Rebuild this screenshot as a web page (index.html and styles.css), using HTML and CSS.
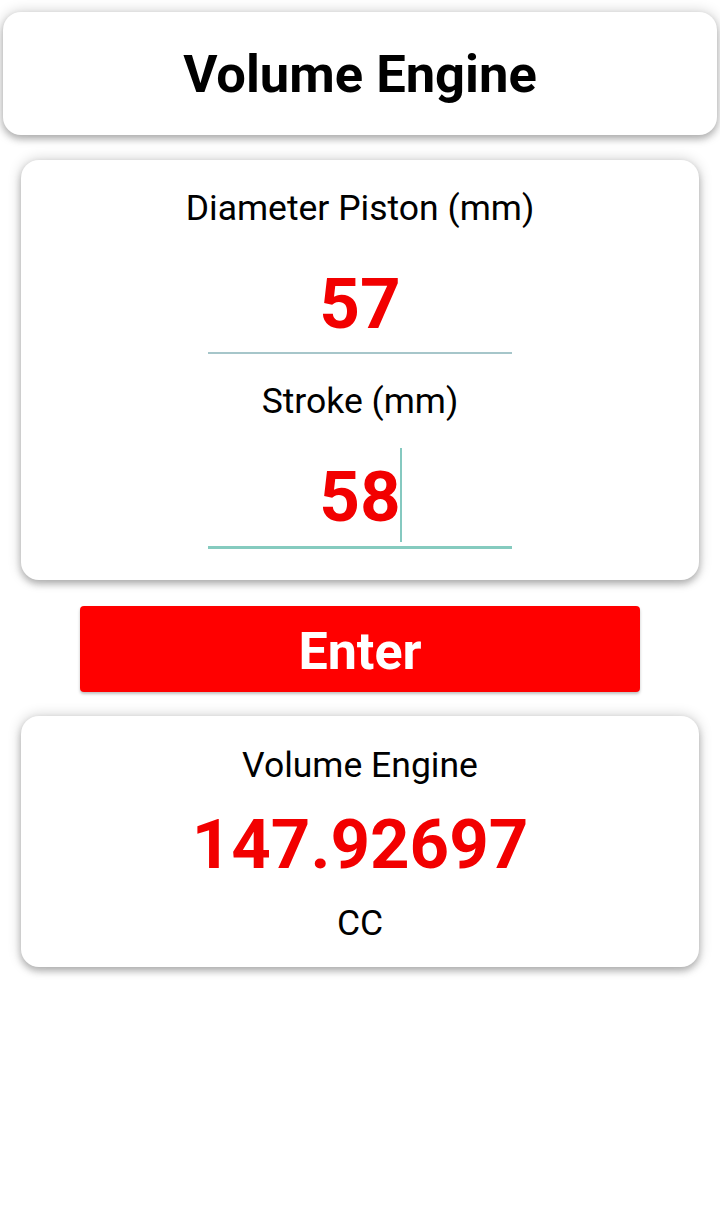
FILE: index.html
```html
<!DOCTYPE html>
<html>
<head>
<meta charset="utf-8">
<title>Volume Engine</title>
<link rel="stylesheet" href="styles.css">
</head>
<body>
<div class="screen">
  <div class="card header-card">
    <h1 class="title">Volume Engine</h1>
  </div>
  <div class="content">
    <div class="card input-card">
      <div class="label">Diameter Piston (mm)</div>
      <div class="field"><span class="value">57</span></div>
      <div class="label label-second">Stroke (mm)</div>
      <div class="field field-focused"><span class="value value-cursor">58</span></div>
    </div>
    <button class="enter-btn">Enter</button>
    <div class="card result-card">
      <div class="label">Volume Engine</div>
      <div class="result">147.92697</div>
      <div class="unit">CC</div>
    </div>
  </div>
</div>
</body>
</html>
```

FILE: styles.css
```css
html, body {
  margin: 0;
  padding: 0;
  background: #ffffff;
}

body {
  font-family: Roboto, "Noto Sans", "Liberation Sans", sans-serif;
  color: #000;
}

.screen {
  height: 980px;
  overflow: hidden;
  padding: 12px 3px 0;
  box-sizing: border-box;
}

.card {
  background: #fff;
  border-radius: 18px;
  box-shadow: 0 4px 7px rgba(0, 0, 0, 0.24), 0 0 14px rgba(0, 0, 0, 0.2);
  text-align: center;
}

.header-card {
  height: 123px;
  display: flex;
  align-items: center;
  justify-content: center;
}

.title {
  margin: 0;
  font-size: 52.5px;
  font-weight: 700;
  line-height: 1;
  padding-top: 2px;
}

.content {
  padding: 25px 18px 0;
  display: flex;
  flex-direction: column;
}

.input-card {
  padding: 24px 0 31px;
  display: flex;
  flex-direction: column;
  align-items: center;
}

.label {
  font-size: 35.5px;
  line-height: 48px;
  color: #000;
}

.label-second {
  margin-top: 23px;
}

.field {
  width: 304px;
  padding-top: 24px;
  line-height: 96px;
  border-bottom: 2px solid #a6c6ca;
  font-size: 71px;
  font-weight: 700;
  color: #f20000;
}

.field-focused {
  padding-top: 23px;
  line-height: 98px;
  border-bottom: 3px solid #85cbbf;
}

.value {
  position: relative;
  display: inline-block;
}

.value-cursor::after {
  content: "";
  position: absolute;
  right: -1px;
  top: 0;
  bottom: 4px;
  width: 2px;
  background: #85c9c0;
}

.enter-btn {
  margin: 26px 59px 0;
  height: 86px;
  border: none;
  border-radius: 4px;
  background: #ff0000;
  color: #fff;
  font-family: Roboto, "Noto Sans", "Liberation Sans", sans-serif;
  font-size: 52px;
  font-weight: 700;
  padding: 4px 0 0;
  box-shadow: 0 2px 3px rgba(0, 0, 0, 0.25);
}

.result-card {
  margin-top: 24px;
  padding: 25px 0 22px;
}

.result {
  font-size: 69px;
  font-weight: 700;
  line-height: 112px;
  color: #f20000;
}

.unit {
  font-size: 35.5px;
  line-height: 44px;
  color: #000;
}
```
